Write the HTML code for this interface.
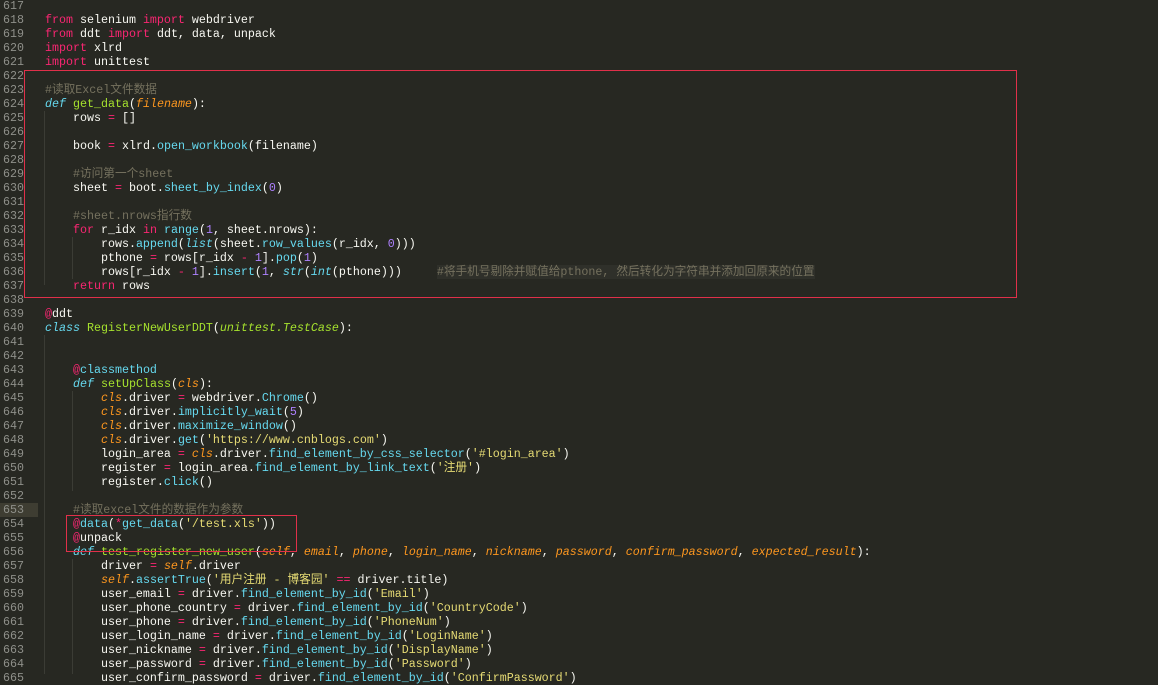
<!DOCTYPE html>
<html><head><meta charset="utf-8"><style>
html,body{margin:0;padding:0;background:#272822;width:1158px;height:674px;overflow:hidden}
#g{position:absolute;left:0;top:-1px;width:24px;text-align:right;font:11.67px/14px "Liberation Mono","Noto Sans CJK SC",monospace;color:#8f908a;white-space:pre}
#c{position:absolute;left:45px;top:-1px;font:11.67px/14px "Liberation Mono","Noto Sans CJK SC",monospace;color:#f8f8f2;white-space:pre;margin:0}
.k{color:#f92672}.f{color:#a6e22e}.s{color:#66d9ef}.si{color:#66d9ef;font-style:italic}.p{color:#fd971f;font-style:italic}.c{color:#75715e}.n{color:#ae81ff}.y{color:#e6db74}
.box{position:absolute;border:1px solid #e0304a}
.hl{position:absolute;left:0;top:503px;width:38px;height:14px;background:#3e3d32}
.cb{background:#2f302a}
.ig{position:absolute;width:1px;background:#3b3c35}
</style></head><body>
<div class="hl"></div>
<div class="ig" style="left:44px;top:335px;height:339px"></div>
<div class="ig" style="left:44px;top:111px;height:174px"></div>
<div class="ig" style="left:72px;top:391px;height:100px"></div>
<div class="ig" style="left:72px;top:559px;height:115px"></div>
<div class="ig" style="left:72px;top:237px;height:42px"></div>
<div id="g">617
618
619
620
621
622
623
624
625
626
627
628
629
630
631
632
633
634
635
636
637
638
639
640
641
642
643
644
645
646
647
648
649
650
651
652
653
654
655
656
657
658
659
660
661
662
663
664
665</div>
<pre id="c">

<span class="k">from</span> selenium <span class="k">import</span> webdriver
<span class="k">from</span> ddt <span class="k">import</span> ddt, data, unpack
<span class="k">import</span> xlrd
<span class="k">import</span> unittest

<span class="c">#读取Excel文件数据</span>
<span class="si">def</span> <span class="f">get_data</span>(<span class="p">filename</span>):
    rows <span class="k">=</span> []

    book <span class="k">=</span> xlrd.<span class="s">open_workbook</span>(filename)

    <span class="c">#访问第一个sheet</span>
    sheet <span class="k">=</span> boot.<span class="s">sheet_by_index</span>(<span class="n">0</span>)

    <span class="c">#sheet.nrows指行数</span>
    <span class="k">for</span> r_idx <span class="k">in</span> <span class="s">range</span>(<span class="n">1</span>, sheet.nrows):
        rows.<span class="s">append</span>(<span class="si">list</span>(sheet.<span class="s">row_values</span>(r_idx, <span class="n">0</span>)))
        pthone <span class="k">=</span> rows[r_idx <span class="k">-</span> <span class="n">1</span>].<span class="s">pop</span>(<span class="n">1</span>)
        rows[r_idx <span class="k">-</span> <span class="n">1</span>].<span class="s">insert</span>(<span class="n">1</span>, <span class="si">str</span>(<span class="si">int</span>(pthone)))     <span class="c cb">#将手机号剔除并赋值给pthone, 然后转化为字符串并添加回原来的位置</span>
    <span class="k">return</span> rows

<span class="k">@</span>ddt
<span class="si">class</span> <span class="f">RegisterNewUserDDT</span>(<span class="f" style="font-style:italic">unittest.TestCase</span>):


    <span class="k">@</span><span class="s">classmethod</span>
    <span class="si">def</span> <span class="f">setUpClass</span>(<span class="p">cls</span>):
        <span class="p">cls</span>.driver <span class="k">=</span> webdriver.<span class="s">Chrome</span>()
        <span class="p">cls</span>.driver.<span class="s">implicitly_wait</span>(<span class="n">5</span>)
        <span class="p">cls</span>.driver.<span class="s">maximize_window</span>()
        <span class="p">cls</span>.driver.<span class="s">get</span>(<span class="y">'https://www.cnblogs.com'</span>)
        login_area <span class="k">=</span> <span class="p">cls</span>.driver.<span class="s">find_element_by_css_selector</span>(<span class="y">'#login_area'</span>)
        register <span class="k">=</span> login_area.<span class="s">find_element_by_link_text</span>(<span class="y">'注册'</span>)
        register.<span class="s">click</span>()

    <span class="c">#读取excel文件的数据作为参数</span>
    <span class="k">@</span><span class="s">data</span>(<span class="k">*</span><span class="s">get_data</span>(<span class="y">'/test.xls'</span>))
    <span class="k">@</span>unpack
    <span class="si">def</span> <span class="f">test_register_new_user</span>(<span class="p">self</span>, <span class="p">email</span>, <span class="p">phone</span>, <span class="p">login_name</span>, <span class="p">nickname</span>, <span class="p">password</span>, <span class="p">confirm_password</span>, <span class="p">expected_result</span>):
        driver <span class="k">=</span> <span class="p">self</span>.driver
        <span class="p">self</span>.<span class="s">assertTrue</span>(<span class="y">'用户注册 - 博客园'</span> <span class="k">==</span> driver.title)
        user_email <span class="k">=</span> driver.<span class="s">find_element_by_id</span>(<span class="y">'Email'</span>)
        user_phone_country <span class="k">=</span> driver.<span class="s">find_element_by_id</span>(<span class="y">'CountryCode'</span>)
        user_phone <span class="k">=</span> driver.<span class="s">find_element_by_id</span>(<span class="y">'PhoneNum'</span>)
        user_login_name <span class="k">=</span> driver.<span class="s">find_element_by_id</span>(<span class="y">'LoginName'</span>)
        user_nickname <span class="k">=</span> driver.<span class="s">find_element_by_id</span>(<span class="y">'DisplayName'</span>)
        user_password <span class="k">=</span> driver.<span class="s">find_element_by_id</span>(<span class="y">'Password'</span>)
        user_confirm_password <span class="k">=</span> driver.<span class="s">find_element_by_id</span>(<span class="y">'ConfirmPassword'</span>)
</pre>
<div class="box" style="left:24px;top:70px;width:991px;height:226px"></div>
<div class="box" style="left:66px;top:515px;width:229px;height:35px"></div>
</body></html>
